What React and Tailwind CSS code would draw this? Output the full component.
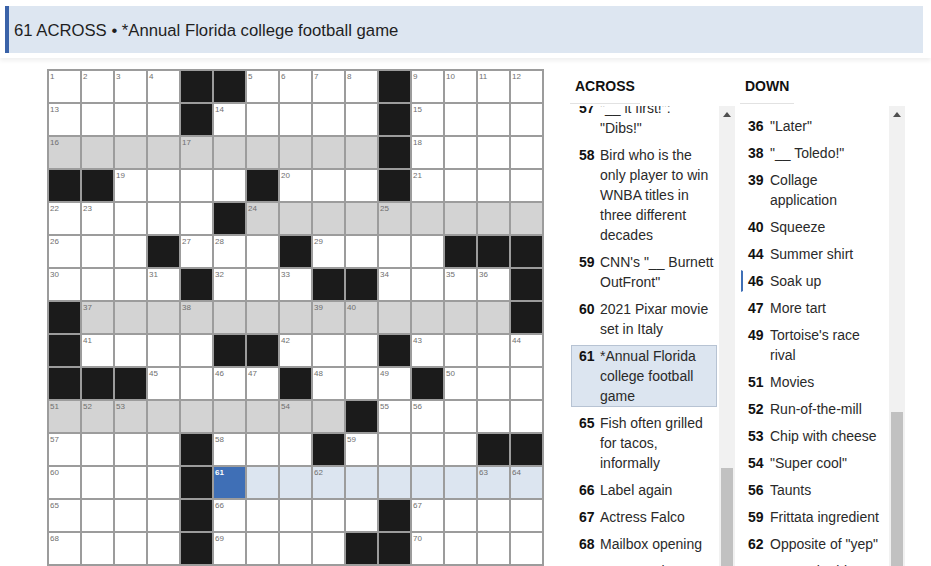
import React from 'react';

const rows = [
  '....##....#....',
  '....#.....#....',
  '..........#....',
  '##....#...#....',
  '.....#.........',
  '...#...#....###',
  '....#...##....#',
  '#.............#',
  '#....##...#....',
  '###....#...#...',
  '.........#.....',
  '....#...#....##',
  '....#..........',
  '....#.....#....',
  '....#....##....',
];

// starred theme entries get a grey fill
const shaded = [
  [2, 0, 9],
  [4, 6, 14],
  [7, 1, 13],
  [10, 0, 8],
];

const selected = { r: 12, c: 5 };
const wordRow = 12;
const wordFrom = 5;
const wordTo = 14;

const acrossClues = [
  [57, '"__ it first!": "Dibs!"'],
  [58, 'Bird who is the only player to win WNBA titles in three different decades'],
  [59, 'CNN\'s "__ Burnett OutFront"'],
  [60, '2021 Pixar movie set in Italy'],
  [61, '*Annual Florida college football game'],
  [65, 'Fish often grilled for tacos, informally'],
  [66, 'Label again'],
  [67, 'Actress Falco'],
  [68, 'Mailbox opening'],
  [69, 'Lose traction'],
];

const downClues = [
  [36, '"Later"'],
  [38, '"__ Toledo!"'],
  [39, 'Collage application'],
  [40, 'Squeeze'],
  [44, 'Summer shirt'],
  [46, 'Soak up'],
  [47, 'More tart'],
  [49, "Tortoise's race rival"],
  [51, 'Movies'],
  [52, 'Run-of-the-mill'],
  [53, 'Chip with cheese'],
  [54, '"Super cool"'],
  [56, 'Taunts'],
  [59, 'Frittata ingredient'],
  [62, 'Opposite of "yep"'],
  [63, 'Pay stub abbr.'],
];

const isBlack = (r, c) => r < 0 || c < 0 || r > 14 || c > 14 || rows[r][c] === '#';

const buildCells = () => {
  let n = 0;
  const cells = [];
  for (let r = 0; r < 15; r++) {
    for (let c = 0; c < 15; c++) {
      if (isBlack(r, c)) {
        cells.push({ r, c, black: true });
        continue;
      }
      const startsAcross = isBlack(r, c - 1) && !isBlack(r, c + 1);
      const startsDown = isBlack(r - 1, c) && !isBlack(r + 1, c);
      const num = startsAcross || startsDown ? ++n : null;
      const grey = shaded.some(([sr, a, b]) => sr === r && c >= a && c <= b);
      cells.push({ r, c, num, grey });
    }
  }
  return cells;
};

const Cell = ({ cell }) => {
  if (cell.black) return <div className="bg-[#1b1b1b]" />;
  const isSel = cell.r === selected.r && cell.c === selected.c;
  const inWord = cell.r === wordRow && cell.c >= wordFrom && cell.c <= wordTo;
  let bg = 'bg-white';
  if (cell.grey) bg = 'bg-[#d3d3d3]';
  if (inWord) bg = 'bg-[#dce5f0]';
  if (isSel) bg = 'bg-[#3f6fb6]';
  return (
    <div className={`relative ${bg}`}>
      {cell.num && (
        <span
          className={`absolute left-[1px] top-[2px] text-[8px] leading-none ${
            isSel ? 'text-white font-bold' : 'text-[#6f6f6f]'
          }`}
        >
          {cell.num}
        </span>
      )}
    </div>
  );
};

const ScrollTrack = ({ thumbTop }) => (
  <div className="relative w-[16px] shrink-0 bg-[#f1f1f1]">
    <div className="flex justify-center pt-[6px]">
      <svg width="8" height="5" viewBox="0 0 8 5">
        <path d="M0 5 L4 0 L8 5 Z" fill="#505050" />
      </svg>
    </div>
    <div className="absolute left-[2px] right-[2px] bottom-0 bg-[#c1c1c1]" style={{ top: thumbTop }} />
  </div>
);

const ClueList = ({ title, clues, active, crossing, offset, thumbTop, down }) => (
  <div className="flex w-[165px] shrink-0 flex-col">
    <div className="pt-[5px]">
      <h3 className="inline-block border-b border-[#e2e2e2] px-[5px] pb-[7px] text-[14px] font-bold leading-[20px] text-[#111]">
        {title}
      </h3>
    </div>
    <div className="mt-[2px] flex h-[461px]">
      <div className="flex-1 overflow-hidden">
        <ul className={`${offset} ${down ? 'pl-[1px] pr-[4px]' : 'pl-[1px] pr-[2px]'}`}>
          {clues.map(([num, text]) => {
            const isActive = num === active;
            const isCross = num === crossing;
            return (
              <li
                key={num}
                className={`mb-[5px] flex text-[14px] leading-[20px] ${
                  isActive
                    ? 'border border-[#b7c3d3] bg-[#dce5f0] pl-[7px]'
                    : down
                    ? `border-y border-r border-transparent border-l-2 pl-[5px] ${isCross ? 'border-l-[#3f6fb6]' : ''}`
                    : 'border border-transparent pl-[7px]'
                }`}
              >
                <span className={`${down ? 'w-[22px]' : 'w-[21px]'} shrink-0 font-bold text-[#111]`}>{num}</span>
                <span className="flex-1 text-[#2a2a2a]">{text}</span>
              </li>
            );
          })}
        </ul>
      </div>
      <ScrollTrack thumbTop={thumbTop} />
    </div>
  </div>
);

const App = () => {
  const cells = buildCells();

  return (
    <div className="h-[566px] w-[931px] overflow-hidden bg-white font-['Liberation_Sans',Arial,sans-serif]">
      <div className="px-[5px] pb-[5px] pt-[6px] shadow-[0_3px_4px_rgba(0,0,0,0.06)]">
        <div className="flex h-[47px] w-[918px] items-center border-l-4 border-[#3a62a8] bg-[#dde6f1] pl-[5px] pt-[2px] text-[16.7px] text-[#1f1f1f]">
          61 ACROSS • *Annual Florida college football game
        </div>
      </div>

      <div className="mt-[11px] flex">
        <div className="ml-[47px] mr-[26px] shrink-0">
          <div className="grid grid-cols-[repeat(15,31px)] grid-rows-[repeat(15,31px)] gap-[2px] border-2 border-[#9c9c9c] bg-[#9c9c9c]">
            {cells.map((cell) => (
              <Cell key={`${cell.r}-${cell.c}`} cell={cell} />
            ))}
          </div>
        </div>

        <ClueList
          title="ACROSS"
          clues={acrossClues}
          active={61}
          offset="-mt-[9px]"
          thumbTop={362}
        />
        <div className="w-[5px] shrink-0" />
        <ClueList
          title="DOWN"
          clues={downClues}
          crossing={46}
          offset="mt-[9px]"
          thumbTop={306}
          down
        />
      </div>
    </div>
  );
};

export default App;
